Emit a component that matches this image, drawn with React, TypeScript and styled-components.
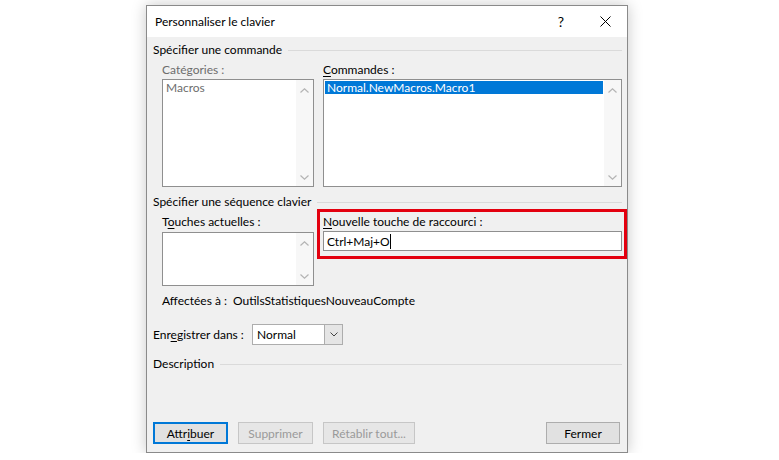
import styled, { createGlobalStyle } from "styled-components";

const GlobalStyle = createGlobalStyle`
    html, body {
        margin: 0;
        background: #ffffff;
    }
    body {
        font-family: Lato, "Noto Sans", "Liberation Sans", sans-serif;
        font-size: 12px;
        color: #000;
    }
`;

const Stage = styled.div`
    padding: 5px 0 0 146px;
`;

const Dialog = styled.div`
    width: 482px;
    height: 448px;
    box-sizing: border-box;
    border: 1px solid #8a8a8a;
    box-shadow: 0 0 14px rgba(0, 0, 0, 0.22);
    display: flex;
    flex-direction: column;
    background: #f0f0f0;
`;

const TitleBar = styled.div`
    height: 31px;
    background: #ffffff;
    display: flex;
    align-items: center;
    padding-left: 8px;
    font-size: 12px;
`;

const TitleText = styled.span`
    flex: 1;
`;

const TitleButton = styled.span`
    width: 44px;
    display: flex;
    justify-content: center;
    align-items: center;
    font-size: 14px;
`;

const Body = styled.div`
    flex: 1;
    display: flex;
    flex-direction: column;
    padding: 0 5px 8px 6px;
`;

const SectionHeader = styled.div<{ $top: number }>`
    display: flex;
    align-items: center;
    gap: 6px;
    height: 16px;
    line-height: 16px;
    margin-top: ${(p) => p.$top}px;

    &::after {
        content: "";
        flex: 1;
        height: 1px;
        background: #dadada;
    }
`;

const Columns = styled.div<{ $top: number }>`
    display: grid;
    grid-template-columns: 152px 1fr;
    column-gap: 9px;
    align-items: start;
    padding-left: 9px;
    margin-top: ${(p) => p.$top}px;
`;

const Column = styled.div<{ $pad?: number }>`
    display: flex;
    flex-direction: column;
    padding-top: ${(p) => p.$pad || 0}px;
`;

const Label = styled.div<{ $disabled?: boolean }>`
    height: 16px;
    line-height: 16px;
    color: ${(p) => (p.$disabled ? "#6d6d6d" : "#000")};
    white-space: nowrap;

    u {
        text-decoration: underline;
        text-underline-offset: 2px;
    }
`;

const ListBox = styled.div<{ $height: number; $top: number }>`
    height: ${(p) => p.$height}px;
    margin-top: ${(p) => p.$top}px;
    box-sizing: border-box;
    border: 1px solid #8f8f8f;
    background: #ffffff;
    display: flex;
`;

const Items = styled.div`
    flex: 1;
    padding: 1px;
`;

const Item = styled.div<{ $selected?: boolean; $disabled?: boolean }>`
    height: 13px;
    line-height: 13px;
    padding-left: 2px;
    background: ${(p) => (p.$selected ? "#0078d7" : "transparent")};
    color: ${(p) => (p.$selected ? "#fff" : p.$disabled ? "#6d6d6d" : "#000")};
`;

const ScrollBar = styled.div`
    width: 17px;
    background: #f7f7f7;
    display: flex;
    flex-direction: column;
    justify-content: space-between;
    align-items: center;
    padding: 8px 0 6px;
`;

const Highlight = styled.div`
    margin: 0 -5px 0 -6px;
    border: 3px solid #e3000f;
    padding: 2px 2px 5px 3px;
    display: flex;
    flex-direction: column;
`;

const TextInput = styled.div`
    height: 20px;
    margin-top: 1px;
    box-sizing: border-box;
    border: 1px solid #8f8f8f;
    background: #ffffff;
    display: flex;
    align-items: center;
    padding-left: 3px;
    white-space: pre;
`;

const Caret = styled.span`
    display: inline-block;
    width: 1px;
    height: 15px;
    background: #000;
`;

const InfoRow = styled.div`
    display: flex;
    height: 16px;
    line-height: 16px;
    padding-left: 9px;
    margin-top: 7px;
    white-space: nowrap;
`;

const InfoLabel = styled.span`
    width: 71px;
`;

const SaveRow = styled.div`
    display: flex;
    align-items: center;
    margin-top: 15px;
    height: 21px;
    white-space: nowrap;

    u {
        text-underline-offset: 2px;
    }
`;

const SaveLabel = styled.span`
    width: 99px;
`;

const Select = styled.div`
    width: 91px;
    height: 21px;
    box-sizing: border-box;
    border: 1px solid #adadad;
    background: #fff;
    display: flex;
    align-items: center;
`;

const SelectValue = styled.span`
    flex: 1;
    padding-left: 4px;
`;

const SelectArrow = styled.span`
    width: 17px;
    height: 100%;
    background: #e5e5e5;
    border-left: 1px solid #adadad;
    display: flex;
    align-items: center;
    justify-content: center;
`;

const ButtonRow = styled.div`
    margin-top: auto;
    display: flex;
    gap: 10px;
    padding-right: 2px;
`;

const Button = styled.div<{ $width: number; $default?: boolean; $disabled?: boolean }>`
    width: ${(p) => p.$width}px;
    height: 22px;
    box-sizing: border-box;
    border: ${(p) => (p.$default ? "2px solid #0078d7" : "1px solid #adadad")};
    border-color: ${(p) => (p.$disabled ? "#c6c6c6" : undefined)};
    background: ${(p) => (p.$disabled ? "#e6e6e6" : "#e1e1e1")};
    color: ${(p) => (p.$disabled ? "#9a9a9a" : "#000")};
    display: flex;
    align-items: center;
    justify-content: center;

    u {
        text-underline-offset: 2px;
    }
`;

const Spacer = styled.div`
    flex: 1;
`;

const Chevron = ({ up }: { up?: boolean }) => (
    <svg width="9" height="5" viewBox="0 0 9 5">
        <polyline
            points={up ? "0.5,4.5 4.5,0.8 8.5,4.5" : "0.5,0.5 4.5,4.2 8.5,0.5"}
            fill="none"
            stroke="#b4b4b4"
            strokeWidth="1.2"
        />
    </svg>
);

const Scroll = () => (
    <ScrollBar>
        <Chevron up />
        <Chevron />
    </ScrollBar>
);

export default function App() {
    return (
        <Stage>
            <GlobalStyle />
            <Dialog>
                <TitleBar>
                    <TitleText>Personnaliser le clavier</TitleText>
                    <TitleButton>?</TitleButton>
                    <TitleButton>
                        <svg width="11" height="11" viewBox="0 0 11 11">
                            <path d="M0.5 0.5 L10.5 10.5 M10.5 0.5 L0.5 10.5" stroke="#000" strokeWidth="1" />
                        </svg>
                    </TitleButton>
                </TitleBar>
                <Body>
                    <SectionHeader $top={5}>Spécifier une commande</SectionHeader>
                    <Columns $top={4}>
                        <Column>
                            <Label $disabled>Catégories :</Label>
                            <ListBox $height={108} $top={1}>
                                <Items>
                                    <Item $disabled>Macros</Item>
                                </Items>
                                <Scroll />
                            </ListBox>
                        </Column>
                        <Column>
                            <Label>
                                <u>C</u>ommandes :
                            </Label>
                            <ListBox $height={108} $top={1}>
                                <Items>
                                    <Item $selected>Normal.NewMacros.Macro1</Item>
                                </Items>
                                <Scroll />
                            </ListBox>
                        </Column>
                    </Columns>

                    <SectionHeader $top={7}>Spécifier une séquence clavier</SectionHeader>
                    <Columns $top={-1}>
                        <Column $pad={5}>
                            <Label>
                                T<u>o</u>uches actuelles :
                            </Label>
                            <ListBox $height={54} $top={2}>
                                <Items />
                                <Scroll />
                            </ListBox>
                        </Column>
                        <Highlight>
                            <Label>
                                <u>N</u>ouvelle touche de raccourci :
                            </Label>
                            <TextInput>
                                Ctrl+Maj+O
                                <Caret />
                            </TextInput>
                        </Highlight>
                    </Columns>

                    <InfoRow>
                        <InfoLabel>Affectées à :</InfoLabel>
                        <span>OutilsStatistiquesNouveauCompte</span>
                    </InfoRow>

                    <SaveRow>
                        <SaveLabel>
                            Enr<u>e</u>gistrer dans :
                        </SaveLabel>
                        <Select>
                            <SelectValue>Normal</SelectValue>
                            <SelectArrow>
                                <svg width="8" height="5" viewBox="0 0 8 5">
                                    <polyline points="0.5,0.5 4,4 7.5,0.5" fill="none" stroke="#444" strokeWidth="1" />
                                </svg>
                            </SelectArrow>
                        </Select>
                    </SaveRow>

                    <SectionHeader $top={11}>Description</SectionHeader>

                    <ButtonRow>
                        <Button $width={75} $default>
                            Attr<u>i</u>buer
                        </Button>
                        <Button $width={75} $disabled>
                            Supprimer
                        </Button>
                        <Button $width={92} $disabled>
                            Rétablir tout...
                        </Button>
                        <Spacer />
                        <Button $width={74}>Fermer</Button>
                    </ButtonRow>
                </Body>
            </Dialog>
        </Stage>
    );
}
